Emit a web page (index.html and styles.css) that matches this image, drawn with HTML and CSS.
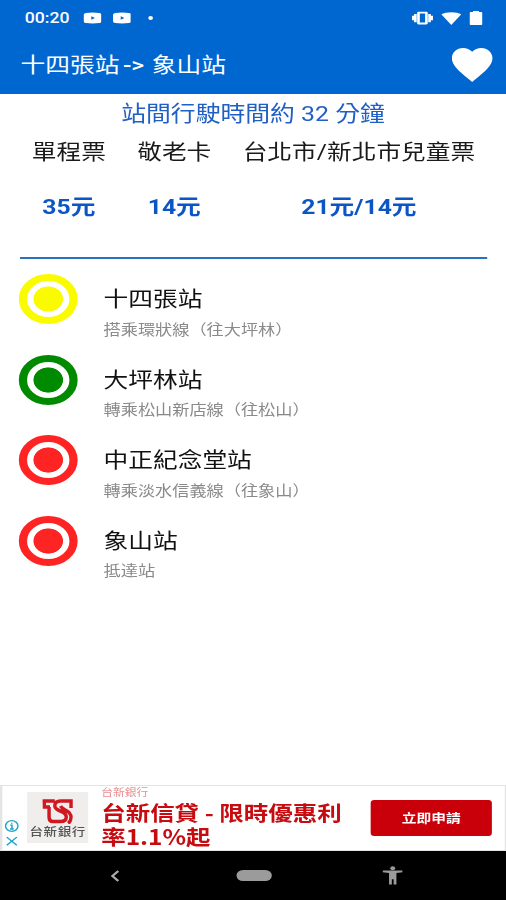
FILE: index.html
```
<!DOCTYPE html>
<html lang="zh-Hant">
<head>
  <meta charset="UTF-8">
  <meta name="viewport" content="width=device-width, initial-scale=1.0">
  <title>十四張站 -> 象山站</title>
  <link rel="stylesheet" href="styles.css">
</head>
<body>
  <div class="screen">
    <header class="header">
      <div class="status">
        <span class="time">00:20</span>
        <svg class="video" viewBox="0 0 16 12"><path fill-rule="evenodd" d="M2 0.8Q8 0 14 0.8Q16 1 16 3V9Q16 11 14 11.2Q8 12 2 11.2Q0 11 0 9V3Q0 1 2 .8ZM6.800 4.200V7.800L10 6Z"/></svg>
        <svg class="video" viewBox="0 0 16 12"><path fill-rule="evenodd" d="M2 0.8Q8 0 14 0.8Q16 1 16 3V9Q16 11 14 11.2Q8 12 2 11.2Q0 11 0 9V3Q0 1 2 .8ZM6.800 4.200V7.800L10 6Z"/></svg>
        <span class="dot"></span>
        <div class="status-right">
          <svg class="vibrate" viewBox="0 0 24 18"><path fill-rule="evenodd" d="M0 12h2.500V6H0zm2.500 2.500h3v-11h-3zM21.500 6v6H24V6zm-3 8.500h3v-11h-3zM16.500 0.500h-9C6.700.500 6 1.200 6 2v14c0 .8.700 1.500 1.500 1.500h9c.8 0 1.500-.7 1.500-1.500V2c0-.8-.7-1.500-1.500-1.500zM15 15H9V3h6z"/></svg>
          <svg class="wifi" viewBox="0 0 24 18"><path d="M12 18L0 3C3 1 7 0 12 0s9 1 12 3z"/></svg>
          <svg class="battery" viewBox="0 0 11 14"><path d="M3 0h5v1h2q1 0 1 1V13q0 1-1 1H1q-1 0-1-1V2q0-1 1-1h2z"/></svg>
        </div>
      </div>
      <div class="title-bar">
        <h1>十四張站<span class="arrow">-&gt;</span>象山站</h1>
        <svg class="heart" viewBox="2 3 20 18.350" preserveAspectRatio="none"><path d="M12 21.350l-1.450-1.320C5.400 15.360 2 12.280 2 8.500 2 5.420 4.420 3 7.500 3c1.740 0 3.410.81 4.500 2.090C13.090 3.810 14.760 3 16.500 3 19.580 3 22 5.420 22 8.500c0 3.780-3.400 6.860-8.550 11.540L12 21.350z"/></svg>
      </div>
    </header>

    <main class="content">
      <p class="duration">站間行駛時間約 32 分鐘</p>
      <div class="fares">
        <span>單程票</span>
        <span>敬老卡</span>
        <span>台北市/新北市兒童票</span>
        <b>35元</b>
        <b>14元</b>
        <b>21元/14元</b>
      </div>

      <ul class="stops">
        <li>
          <span class="marker yellow"></span>
          <div>
            <h2>十四張站</h2>
            <p>搭乘環狀線（往大坪林）</p>
          </div>
        </li>
        <li>
          <span class="marker green"></span>
          <div>
            <h2>大坪林站</h2>
            <p>轉乘松山新店線（往松山）</p>
          </div>
        </li>
        <li>
          <span class="marker red"></span>
          <div>
            <h2>中正紀念堂站</h2>
            <p>轉乘淡水信義線（往象山）</p>
          </div>
        </li>
        <li>
          <span class="marker red"></span>
          <div>
            <h2>象山站</h2>
            <p>抵達站</p>
          </div>
        </li>
      </ul>
    </main>

    <div class="ad">
      <div class="ad-choices">
        <svg viewBox="0 0 14 14"><circle cx="7" cy="7" r="6.200"/><path d="M5.500 6H7.200V10.500M5.300 10.500H9M7 3.200V4.500"/></svg>
        <svg viewBox="0 0 14 14"><path d="M2 2.500L12 12M12 2.500L2 12"/></svg>
      </div>
      <div class="ad-logo">
        <svg viewBox="0 0 32 25" preserveAspectRatio="none"><path d="M0 2H13M2 2V8H8M7 8V18Q7 22.500 11 22.500H19Q25 22.500 25 18Q25 14.500 20 12.500Q13 10 13 7Q13 2 19 2H30V9M19 7Q20 9 24 11Q30 14 30 18Q30 22 27 24.500"/></svg>
        <span>台新銀行</span>
      </div>
      <div class="ad-text">
        <small>台新銀行</small>
        <strong>台新信貸 - 限時優惠利率1.1%起</strong>
      </div>
      <button type="button">立即申請</button>
    </div>

    <nav class="nav">
      <svg class="back" viewBox="0 0 8 12"><path d="M6.500 1L1.500 6L6.500 11"/></svg>
      <span class="home"></span>
      <svg class="access" viewBox="0 0 18 20"><circle cx="9" cy="2.400" r="2.200"/><path d="M0 4.800H18V6.600L12.300 7.400V19.500H9.800V14H8.200V19.500H5.700V7.400L0 6.600Z"/></svg>
    </nav>
  </div>
</body>
</html>
```

FILE: styles.css
```
* {
  box-sizing: border-box;
}

body {
  margin: 0;
  background: #fff;
  overflow: hidden;
  font-family: Roboto, "Noto Sans CJK TC", sans-serif;
}

h1,
h2,
p,
ul {
  margin: 0;
  padding: 0;
  font-weight: normal;
}

svg {
  display: block;
  flex: none;
}

/* 430px wide phone layout stretched to the 506px window */
.screen {
  display: flex;
  flex-direction: column;
  width: 430px;
  height: 900px;
  transform: scaleX(1.17674);
  transform-origin: 0 0;
}

/* Header */
.header {
  height: 93.500px;
  background: #0066d0;
  color: #fff;
}

.header svg {
  fill: #fff;
}

.status {
  display: flex;
  align-items: center;
  height: 36px;
  padding: 0 20px 0 21px;
}

.time {
  width: 49.500px;
  font-size: 15px;
  font-weight: 500;
}

.video {
  width: 15.500px;
  height: 12px;
  margin-right: 9.700px;
}

.dot {
  width: 4px;
  height: 4px;
  margin-left: 5.500px;
  border-radius: 50%;
  background: #fff;
}

.status-right {
  display: flex;
  align-items: center;
  gap: 7px;
  margin-left: auto;
}

.vibrate {
  width: 18px;
  height: 14px;
}

.wifi {
  width: 17px;
  height: 13px;
}

.battery {
  width: 11px;
  height: 14px;
}

.title-bar {
  display: flex;
  align-items: center;
  justify-content: space-between;
  height: 57px;
  padding: 0 11.500px 0 17.500px;
}

h1 {
  font-size: 21px;
  line-height: 30px;
}

.arrow {
  margin: 0 6.500px 0 3px;
  font-weight: 500;
}

.heart {
  width: 34.500px;
  height: 34px;
}

/* Fares */
.content {
  flex: 1;
}

.duration {
  padding-top: 5px;
  color: #205fc4;
  font-size: 21.100px;
  line-height: 30px;
  text-align: center;
}

.fares {
  display: grid;
  grid-template-columns: repeat(3, max-content);
  grid-template-rows: 30px 30px;
  gap: 25px 26.600px;
  height: 130px;
  margin: 0 16px 0 17px;
  padding: 8px 0 0 10px;
  border-bottom: 2px solid #2a72bf;
  color: #1a1a1a;
  font-size: 21px;
  line-height: 30px;
  text-align: center;
}

.fares b {
  color: #0b55c4;
  font-weight: 700;
}

/* Stops */
.stops {
  padding: 15.500px 16px;
  list-style: none;
}

.stops li {
  display: flex;
  height: 80.500px;
}

.marker {
  width: 50px;
  height: 50px;
  margin-right: 22px;
  border: 7px solid;
  border-radius: 50%;
  background: radial-gradient(circle, currentColor 12.200px, #fff 12.900px);
}

.yellow {
  color: #fbfb00;
}

.green {
  color: #008a00;
}

.red {
  color: #ff2424;
}

.stops h2 {
  padding-top: 10px;
  color: #111;
  font-size: 21px;
  line-height: 30px;
}

.stops p {
  padding-top: 4.500px;
  color: #8a8a8a;
  font-family: "Noto Sans CJK JP", sans-serif;
  -webkit-locale: "ja";
  font-size: 14.600px;
  line-height: 20px;
}

/* Ad banner */
.ad {
  display: flex;
  height: 66px;
  border: 1px solid #e4e4e4;
  border-left-width: 2px;
  background: #fff;
}

.ad-choices {
  display: flex;
  flex-direction: column;
  justify-content: flex-end;
  gap: 3px;
  width: 21px;
  padding: 0 0 3px 2px;
}

.ad-choices svg {
  width: 12px;
  height: 12px;
  fill: none;
  stroke: #1ba3ca;
  stroke-width: 1.500;
}

.ad-logo {
  display: flex;
  flex-direction: column;
  align-items: center;
  width: 52px;
  height: 51px;
  margin-top: 6px;
  padding-top: 7px;
  background: #efeeec;
}

.ad-logo svg {
  width: 26px;
  height: 25px;
  fill: none;
  stroke: #d01820;
  stroke-width: 3.600;
}

.ad-logo span {
  color: #555;
  font-size: 11.500px;
  font-weight: 500;
  line-height: 16px;
  letter-spacing: 0.500px;
  white-space: nowrap;
}

.ad-text {
  width: 214px;
  margin-left: 11px;
  color: #c60c10;
  font-family: "Noto Sans CJK TC", sans-serif;
}

.ad-text small,
.ad-text strong {
  display: block;
}

.ad-text small {
  margin-bottom: 2px;
  color: #e78f90;
  font-size: 10px;
  line-height: 12px;
}

.ad-text strong {
  font-size: 20.800px;
  font-weight: 700;
  line-height: 24px;
}

.ad button {
  width: 103px;
  height: 36px;
  margin: 13.500px 0 0 15px;
  padding: 0;
  border: 0;
  border-radius: 3px;
  background: #c90009;
  color: #fff;
  font: 700 12.500px/35px "Noto Sans CJK TC", sans-serif;
}

/* Navigation bar */
.nav {
  display: flex;
  align-items: center;
  height: 49px;
  padding-left: 94px;
  background: #000;
}

.back {
  width: 8px;
  height: 12px;
  fill: none;
  stroke: #aaa;
  stroke-width: 2;
}

.home {
  width: 30px;
  height: 11px;
  margin: 0 94px 0 98.500px;
  border-radius: 6px;
  background: #9b9b9b;
}

.access {
  width: 17.500px;
  height: 19px;
  fill: #9b9b9b;
}
```
